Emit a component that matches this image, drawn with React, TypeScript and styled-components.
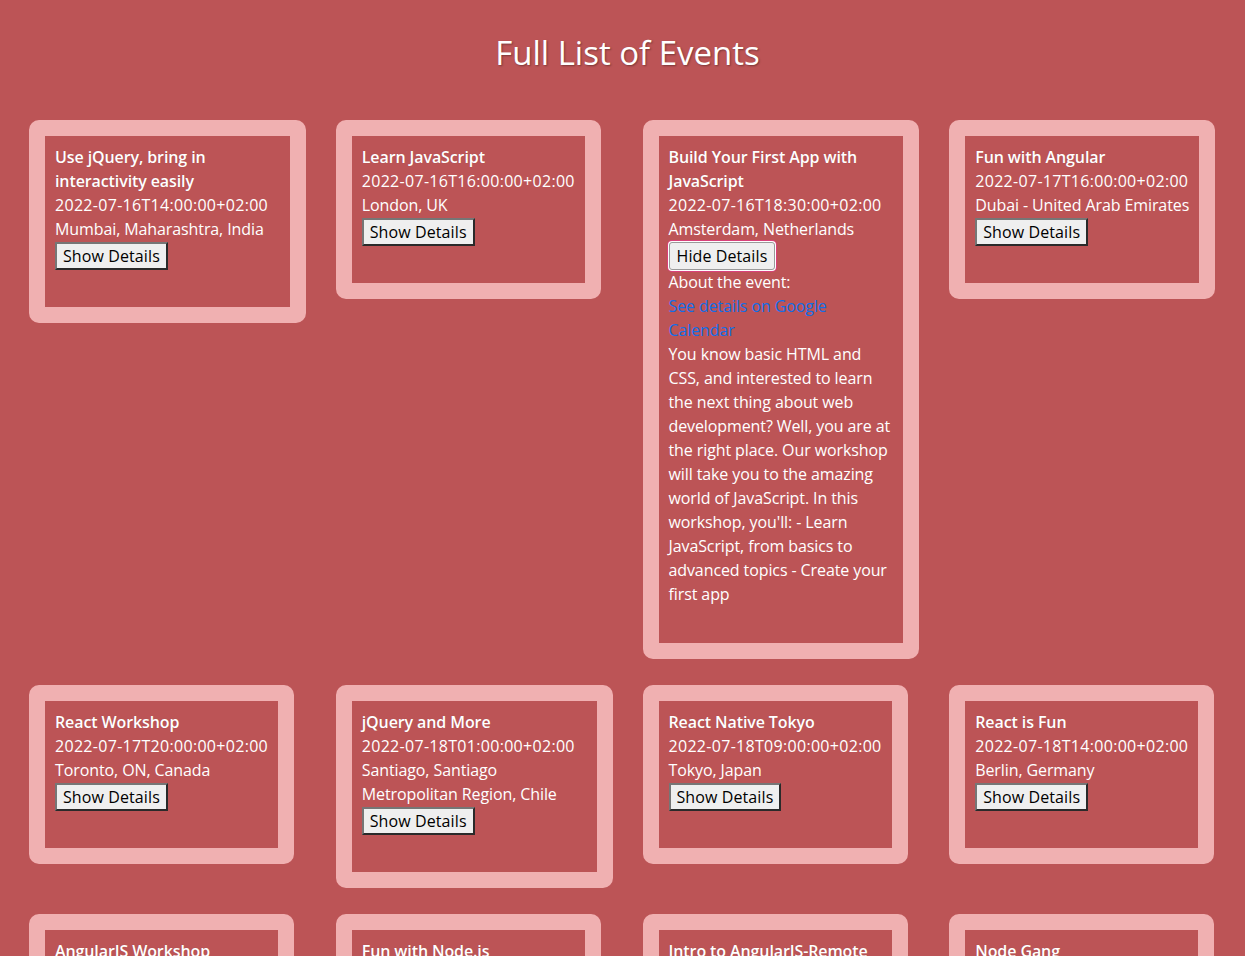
import React, { useState } from "react";
import styled, { createGlobalStyle, css } from "styled-components";

const GlobalStyle = createGlobalStyle`
  html, body {
    margin: 0;
    padding: 0;
    background: #bc5456;
  }
  body {
    font-family: "Open Sans", "Noto Sans", sans-serif;
    color: #ffffff;
  }
`;

const Page = styled.main`
  padding: 0 19px 40px 29px;
`;

const Heading = styled.h1`
  margin: 0;
  padding: 33px 0 47px;
  text-align: center;
  font-size: 33px;
  line-height: 40px;
  font-weight: 500;
  color: #ffffff;
  text-shadow: 1px 1px 2px rgba(0, 0, 0, 0.35);
`;

const Grid = styled.ul`
  list-style: none;
  margin: 0;
  padding: 0;
  display: grid;
  grid-template-columns: repeat(4, minmax(0, 1fr));
  column-gap: 30px;
  row-gap: 26px;
  align-items: start;
  justify-items: start;
`;

const Card = styled.li`
  box-sizing: border-box;
  max-width: 100%;
  width: fit-content;
  border: 16px solid #f0b0b1;
  border-radius: 10px;
  background: #bc5456;
  padding: 9px 10px 37px;
  font-size: 16px;
  line-height: 24px;
  letter-spacing: -0.1px;
`;

const Title = styled.div`
  font-weight: 600;
  letter-spacing: -0.1px;
  text-shadow: 0 0 1px rgba(0, 0, 0, 0.15);
`;

const Line = styled.div<{ $numeric?: boolean }>`
  ${(p) =>
    p.$numeric &&
    css`
      letter-spacing: 0.3px;
    `}
`;

const DetailsButton = styled.button<{ $active: boolean }>`
  display: block;
  margin: 1px 0 0;
  padding: 1px 6px;
  font-family: inherit;
  font-size: 16px;
  line-height: 22px;
  letter-spacing: 0.1px;
  color: #000;
  background: #efefef;
  border-style: solid;
  border-width: 2px;
  border-color: #767676 #2a2a2a #2a2a2a #767676;
  cursor: pointer;
  ${(p) =>
    p.$active &&
    css`
      border: 1px solid #9a9a9a;
      border-radius: 3px;
      padding: 2px 7px;
      box-shadow: 0 0 0 1px #ffffff, 0 0 0 2px #d8417a;
    `}
`;

const Details = styled.div``;

const CalendarLink = styled.a`
  display: block;
  color: #106ee8;
  text-decoration: none;
`;

type EventItem = {
  id: number;
  name: string;
  start: string;
  location: string;
  description: string;
};

const events: EventItem[] = [
  {
    id: 1,
    name: "Use jQuery, bring in interactivity easily",
    start: "2022-07-16T14:00:00+02:00",
    location: "Mumbai, Maharashtra, India",
    description:
      "Learn how jQuery makes it easy to add interactivity to your web pages.",
  },
  {
    id: 2,
    name: "Learn JavaScript",
    start: "2022-07-16T16:00:00+02:00",
    location: "London, UK",
    description: "An introduction to JavaScript for complete beginners.",
  },
  {
    id: 3,
    name: "Build Your First App with JavaScript",
    start: "2022-07-16T18:30:00+02:00",
    location: "Amsterdam, Netherlands",
    description:
      "You know basic HTML and CSS, and interested to learn the next thing about web development? Well, you are at the right place. Our workshop will take you to the amazing world of JavaScript. In this workshop, you'll: - Learn JavaScript, from basics to advanced topics - Create your first app",
  },
  {
    id: 4,
    name: "Fun with Angular",
    start: "2022-07-17T16:00:00+02:00",
    location: "Dubai - United Arab Emirates",
    description: "Have fun building apps with Angular.",
  },
  {
    id: 5,
    name: "React Workshop",
    start: "2022-07-17T20:00:00+02:00",
    location: "Toronto, ON, Canada",
    description: "A hands-on React workshop.",
  },
  {
    id: 6,
    name: "jQuery and More",
    start: "2022-07-18T01:00:00+02:00",
    location: "Santiago, Santiago Metropolitan Region, Chile",
    description: "jQuery and beyond.",
  },
  {
    id: 7,
    name: "React Native Tokyo",
    start: "2022-07-18T09:00:00+02:00",
    location: "Tokyo, Japan",
    description: "Build mobile apps with React Native.",
  },
  {
    id: 8,
    name: "React is Fun",
    start: "2022-07-18T14:00:00+02:00",
    location: "Berlin, Germany",
    description: "React is fun.",
  },
  {
    id: 9,
    name: "AngularJS Workshop",
    start: "2022-07-18T18:00:00+02:00",
    location: "Paris, France",
    description: "AngularJS workshop.",
  },
  {
    id: 10,
    name: "Fun with Node.js",
    start: "2022-07-19T10:00:00+02:00",
    location: "London, UK",
    description: "Node.js for fun.",
  },
  {
    id: 11,
    name: "Intro to AngularJS-Remote",
    start: "2022-07-19T14:00:00+02:00",
    location: "Online",
    description: "Remote intro to AngularJS.",
  },
  {
    id: 12,
    name: "Node Gang",
    start: "2022-07-19T18:00:00+02:00",
    location: "Berlin, Germany",
    description: "Node Gang meetup.",
  },
];

function EventCard({
  event,
  open,
  onToggle,
}: {
  event: EventItem;
  open: boolean;
  onToggle: () => void;
}) {
  return (
    <Card>
      <Title>{event.name}</Title>
      <Line $numeric>{event.start}</Line>
      <Line>{event.location}</Line>
      <DetailsButton type="button" $active={open} onClick={onToggle}>
        {open ? "Hide Details" : "Show Details"}
      </DetailsButton>
      {open && (
        <Details>
          <Line>About the event:</Line>
          <CalendarLink href="#">See details on Google Calendar</CalendarLink>
          <Line>{event.description}</Line>
        </Details>
      )}
    </Card>
  );
}

export default function App() {
  const [openIds, setOpenIds] = useState<number[]>([3]);
  const toggle = (id: number) =>
    setOpenIds((ids) =>
      ids.includes(id) ? ids.filter((x) => x !== id) : [...ids, id]
    );
  return (
    <>
      <GlobalStyle />
      <Page>
        <Heading>Full List of Events</Heading>
        <Grid>
          {events.map((e) => (
            <EventCard
              key={e.id}
              event={e}
              open={openIds.includes(e.id)}
              onToggle={() => toggle(e.id)}
            />
          ))}
        </Grid>
      </Page>
    </>
  );
}
